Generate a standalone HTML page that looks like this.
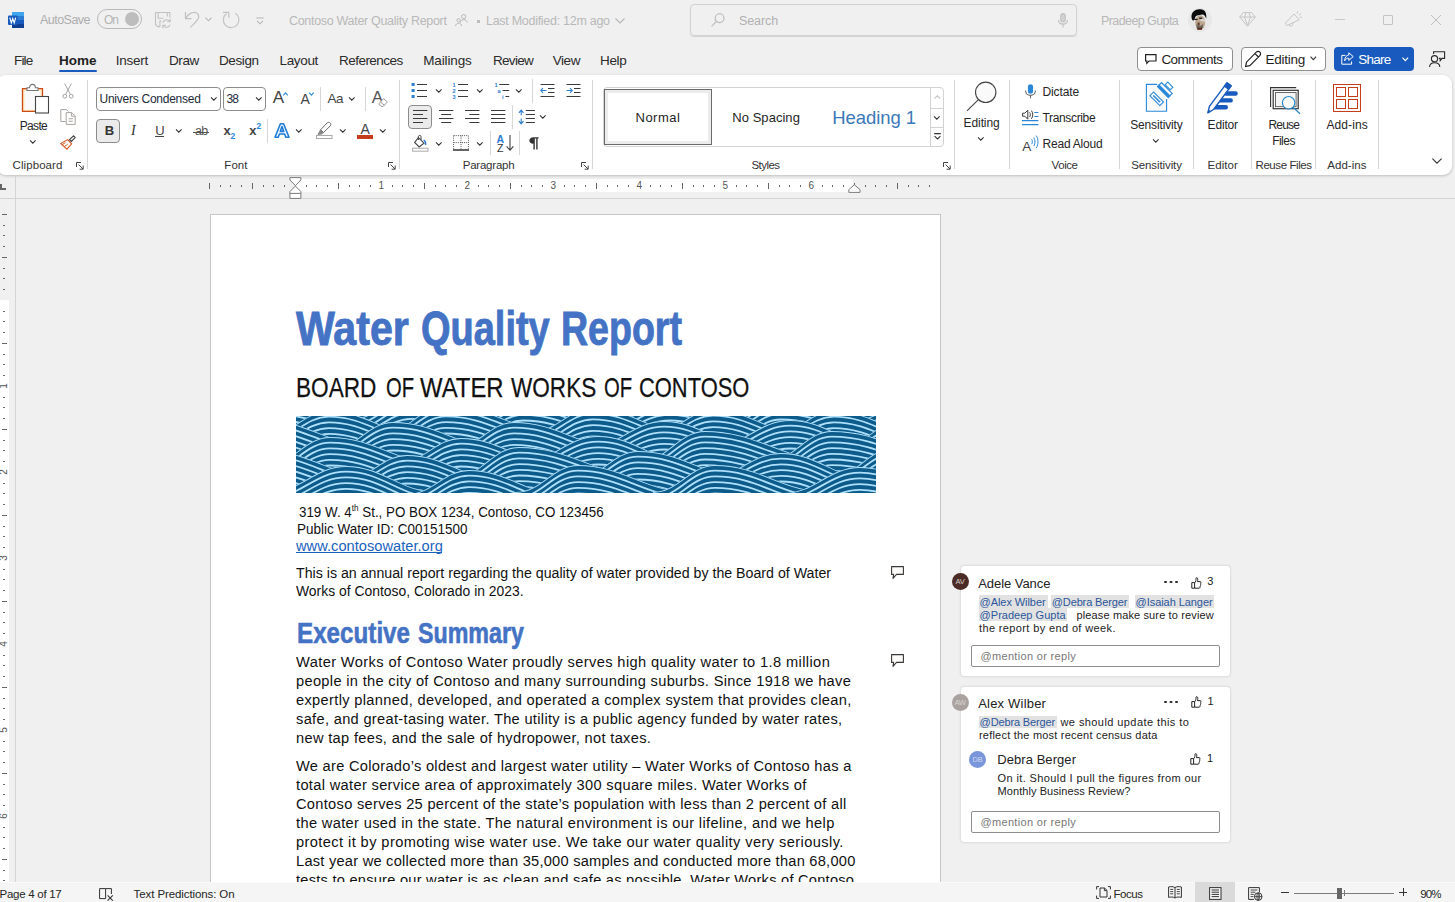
<!DOCTYPE html>
<html>
<head>
<meta charset="utf-8">
<title>Word</title>
<style>
*{box-sizing:border-box;margin:0;padding:0}
html,body{width:1455px;height:902px;overflow:hidden;background:#f0f0f0;font-family:"Liberation Sans",sans-serif;color:#222;}
body{position:relative;font-size:12px}
.abs{position:absolute}
.t{position:absolute;white-space:nowrap;line-height:1}
svg{position:absolute;overflow:visible}
/* ---------- title bar ---------- */
#titlebar{position:absolute;left:0;top:0;width:1455px;height:40px}
.gray{color:#9a9a9a}
/* ---------- tabs ---------- */
#tabs .t{font-size:13.5px;color:#2b2b2b;top:53.6px}
/* ---------- ribbon ---------- */
#ribbon{position:absolute;left:-3px;top:75px;width:1455px;height:100px;background:#fff;border-radius:9px;box-shadow:0 1px 3px rgba(0,0,0,.22)}
.sep{position:absolute;width:1px;background:#d6d6d6}
.glabel{position:absolute;white-space:nowrap;font-size:11.5px;color:#333;top:159.6px;line-height:1;letter-spacing:-0.1px}
.rt{position:absolute;white-space:nowrap;font-size:12px;color:#262626;line-height:1;letter-spacing:-0.2px}
/* ---------- ruler ---------- */
#ruler{position:absolute;left:0;top:176px;width:1455px;height:23px}
/* ---------- doc ---------- */
#page{position:absolute;left:210px;top:214px;width:731px;height:690px;background:#fff;border:1px solid #c6c6c6}
/* ---------- status ---------- */
#status{position:absolute;left:0;top:882px;width:1455px;height:20px;background:#f5f5f5}
#status .t{font-size:11.5px;color:#262626}
</style>
</head>
<body>

<!-- ================= TITLE BAR ================= -->
<div id="titlebar">
<!-- word icon -->
<svg style="left:8px;top:12px" width="16" height="16" viewBox="0 0 16 16">
  <rect x="4" y="0" width="12" height="4" fill="#41a5ee"/>
  <rect x="4" y="4" width="12" height="4" fill="#2b7cd3"/>
  <rect x="4" y="8" width="12" height="4" fill="#185abd"/>
  <rect x="4" y="12" width="12" height="4" fill="#103f91"/>
  <rect x="0" y="3.5" width="9.5" height="9.5" rx="1" fill="#185abd"/>
  <path d="M1.8 5.6 L3.3 10.9 L4.75 6.6 L6.2 10.9 L7.7 5.6" fill="none" stroke="#fff" stroke-width="1.15" stroke-linejoin="miter"/>
</svg>
<div class="t gray" style="left:40px;top:14px;font-size:12.5px;letter-spacing:-0.53px;color:#adadad">AutoSave</div>
<div class="abs" style="left:97px;top:9px;width:45px;height:20px;border:1px solid #b9b9b9;border-radius:10px"></div>
<div class="t" style="left:104px;top:14px;font-size:12px;color:#b4b4b4;letter-spacing:-1px">On</div>
<div class="abs" style="left:125px;top:12px;width:14px;height:14px;border-radius:7px;background:#bdbdbd"></div>
<!-- save -->
<svg style="left:155px;top:12px" width="17" height="17" viewBox="0 0 17 17" fill="none" stroke="#c2c2c2" stroke-width="1.1">
  <path d="M5.3 14.6 H2.7 L0.5 12.5 V0.5 H14.8 V5.4"/>
  <path d="M3.2 0.5 V6.2 H8.6 M12.3 0.5 V4.5"/>
  <path d="M4.9 14.6 V9.1 H6.5"/>
  <path d="M8 10.6 A3.7 3.7 0 0 1 14.6 9.4 M15.2 6.8 V9.8 H12.2"/>
  <path d="M15 12.6 A3.7 3.7 0 0 1 8.4 13.8 M7.8 16.4 V13.4 H10.8"/>
</svg>
<!-- undo -->
<svg style="left:184px;top:11px" width="17" height="18" viewBox="0 0 17 18" fill="none" stroke="#c0c0c0" stroke-width="1.2">
  <path d="M1.5 1 V7.6 H7.5"/>
  <path d="M1.8 7.3 C4 3.5 7 1.4 10.5 1.4 C13.5 1.4 15.2 4 14.6 6.6 C14 9 11 12 6.4 16.4"/>
</svg>
<svg style="left:205px;top:17px" width="7" height="5" viewBox="0 0 7 5" fill="none" stroke="#b5b5b5" stroke-width="1.1"><path d="M0.5 0.7 L3.5 3.8 L6.5 0.7"/></svg>
<!-- redo -->
<svg style="left:222px;top:11px" width="18" height="18" viewBox="0 0 18 18" fill="none" stroke="#c4c4c4" stroke-width="1.2">
  <path d="M1 1.4 H6.8 V6.8"/>
  <path d="M13.4 2.2 A7.8 7.8 0 1 1 4.6 2.4"/>
</svg>
<!-- customize qat -->
<svg style="left:256px;top:16.5px" width="8" height="8" viewBox="0 0 8 8" fill="none" stroke="#b5b5b5" stroke-width="1.1"><path d="M0.3 1 H7.7 M1 3.8 L4 6.8 L7 3.8"/></svg>

<div class="t" style="left:289px;top:15px;font-size:12.5px;color:#b8b8b8;letter-spacing:-0.31px">Contoso Water Quality Report</div>
<!-- people -->
<svg style="left:455px;top:14px" width="13" height="13" viewBox="0 0 13 13" fill="none" stroke="#b8b8b8" stroke-width="1">
  <circle cx="8.7" cy="2.6" r="2.1"/><path d="M5.5 8.5 C5.5 4.8 12 4.8 12.3 8.5"/>
  <circle cx="3.6" cy="6.3" r="1.7"/><path d="M0.6 12 C0.6 8.4 6.6 8.4 6.6 12"/>
</svg>
<div class="abs" style="left:477px;top:20px;width:3px;height:3px;background:#bdbdbd"></div>
<div class="t" style="left:486px;top:15px;font-size:12.5px;color:#b8b8b8;letter-spacing:-0.28px">Last Modified: 12m ago</div>
<svg style="left:615px;top:18px" width="10" height="6" viewBox="0 0 10 6" fill="none" stroke="#b5b5b5" stroke-width="1.1"><path d="M0.5 0.5 L5 5 L9.5 0.5"/></svg>

<!-- search -->
<div class="abs" style="left:690px;top:4px;width:387px;height:32px;border:1px solid #d2d2d2;border-radius:4px;box-shadow:0 1px 1px rgba(0,0,0,.12)"></div>
<svg style="left:711px;top:13px" width="14" height="14" viewBox="0 0 14 14" fill="none" stroke="#b8b8b8" stroke-width="1.1"><circle cx="8.6" cy="5.2" r="4.4"/><path d="M5.4 8.4 L0.6 13.4"/></svg>
<div class="t" style="left:739px;top:15px;font-size:12.5px;color:#b0b0b0;letter-spacing:-0.1px">Search</div>
<svg style="left:1058px;top:13px" width="10" height="15" viewBox="0 0 10 15" fill="none" stroke="#c0c0c0" stroke-width="1.1"><rect x="2.8" y="0.6" width="4.4" height="8.4" rx="2.2" fill="#d2d2d2"/><path d="M0.6 7 C0.6 12.5 9.4 12.5 9.4 7 M5 11.2 V14.5"/></svg>

<div class="t" style="left:1101px;top:15px;font-size:12.5px;color:#b8b8b8;letter-spacing:-0.58px">Pradeep Gupta</div>
<!-- avatar -->
<svg style="left:1188px;top:8.4px" width="24" height="24" viewBox="0 0 24 24">
  <defs><clipPath id="avc"><circle cx="12" cy="12" r="12"/></clipPath></defs>
  <g clip-path="url(#avc)">
    <rect width="24" height="24" fill="#e7e7e7"/>
    <ellipse cx="12.2" cy="14.6" rx="5" ry="7.4" fill="#bda68f"/>
    <path d="M13 10.5 C15.5 10.5 17.5 11.5 17.4 13.5 C16 14 13.5 13.4 12 12.6 Z" fill="#dad3d1"/>
    <path d="M3.6 10 C2.6 3.5 8 0.8 12 1.2 C16.5 0.8 19 4.5 18.2 10.8 C17.5 8.4 16.2 6.2 14 6.4 C11 7.6 8.5 6.8 7.6 8.4 C6.8 9.6 6.8 11.6 5.6 12.6 C4.4 12.6 3.8 11.4 3.6 10 Z" fill="#0b0b0b"/>
    <rect x="11.2" y="9.6" width="3" height="1.3" fill="#1c1c1c"/>
    <rect x="6.2" y="10.8" width="3.4" height="1.2" fill="#1c1c1c"/>
    <path d="M9.6 14.4 H11.6 V17.6 H9.6 Z" fill="#5b3528"/>
    <path d="M8.2 16.5 L12.4 18 L15 16 L15 20 L9 21.5 Z" fill="#6f6762"/>
    <rect x="9.4" y="19.6" width="4.6" height="2.2" fill="#5a2e20"/>
  </g>
</svg>
<!-- diamond -->
<svg style="left:1239px;top:12px" width="17" height="15" viewBox="0 0 17 15" fill="none" stroke="#c6c6c6" stroke-width="1"><path d="M4.2 0.6 H12.8 L16.3 5 L8.5 14.2 L0.7 5 Z M0.7 5 H16.3 M5.6 5 L8.5 14 L11.4 5 M5.6 5 L7 0.8 M11.4 5 L10 0.8"/></svg>
<!-- megaphone -->
<svg style="left:1285px;top:11px" width="17" height="17" viewBox="0 0 17 17" fill="none" stroke="#c6c6c6" stroke-width="1"><path d="M9 3 L14.2 8.8 L2 14.6 C0.6 13.6 0.4 12.4 1 11.4 Z M4.2 13.8 C4.6 16 7.6 16 7.8 12.2 M12 2.4 L12.8 0.4 M14 4.2 L16 2.4 M14.8 6.4 L16.8 6.2"/></svg>
<!-- window controls -->
<div class="abs" style="left:1335px;top:19px;width:10px;height:1px;background:#c8c8c8"></div>
<div class="abs" style="left:1383px;top:15px;width:10px;height:10px;border:1px solid #c4c4c4;border-radius:1px"></div>
<svg style="left:1431px;top:15px" width="10" height="10" viewBox="0 0 10 10" fill="none" stroke="#c0c0c0" stroke-width="1"><path d="M0 0 L10 10 M10 0 L0 10"/></svg>

</div>

<!-- ================= TABS ================= -->
<div id="tabs">
<div class="t" style="left:14px;letter-spacing:-0.82px">File</div>
<div class="t" style="left:59px;font-weight:700;letter-spacing:0;color:#1f1f1f">Home</div>
<div class="abs" style="left:59px;top:70px;width:38px;height:2px;background:#185abd;border-radius:1px"></div>
<div class="t" style="left:115.7px;letter-spacing:-0.24px">Insert</div>
<div class="t" style="left:169px;letter-spacing:-0.38px">Draw</div>
<div class="t" style="left:219px;letter-spacing:-0.39px">Design</div>
<div class="t" style="left:279.5px;letter-spacing:-0.34px">Layout</div>
<div class="t" style="left:339px;letter-spacing:-0.53px">References</div>
<div class="t" style="left:423.2px;letter-spacing:-0.13px">Mailings</div>
<div class="t" style="left:493px;letter-spacing:-0.71px">Review</div>
<div class="t" style="left:552.7px;letter-spacing:-0.43px">View</div>
<div class="t" style="left:600px;letter-spacing:-0.32px">Help</div>

<!-- Comments button -->
<div class="abs" style="left:1137px;top:47px;width:96px;height:24px;background:#fff;border:1px solid #8f8f8f;border-radius:4px"></div>
<svg style="left:1145px;top:54px" width="12" height="10" viewBox="0 0 12 10" fill="none" stroke="#222" stroke-width="1.2"><path d="M0.6 0.6 H11 V7 H4 L1.8 9.3 V7 H0.6 Z"/></svg>
<div class="t" style="left:1161.4px;top:52.7px;letter-spacing:-0.52px;color:#1f1f1f">Comments</div>
<!-- Editing button -->
<div class="abs" style="left:1241px;top:47px;width:85px;height:24px;background:#fff;border:1px solid #8f8f8f;border-radius:4px"></div>
<svg style="left:1245px;top:51px" width="16" height="16" viewBox="0 0 16 16" fill="none" stroke="#222" stroke-width="1.2"><path d="M11.3 1.2 C12.4 0.1 14 0.3 14.9 1.2 C15.8 2.1 15.8 3.6 14.8 4.6 L4.8 14.6 L0.6 15.5 L1.5 11.2 Z M10 2.6 L13.4 6"/></svg>
<div class="t" style="left:1265.5px;top:52.7px;letter-spacing:-0.25px;color:#1f1f1f">Editing</div>
<svg style="left:1310px;top:56px" width="7" height="5" viewBox="0 0 7 5" fill="none" stroke="#333" stroke-width="1.1"><path d="M0.5 0.7 L3.3 3.6 L6.1 0.7"/></svg>
<!-- Share button -->
<div class="abs" style="left:1334px;top:47px;width:80px;height:24px;background:#185abd;border-radius:4px"></div>
<svg style="left:1341px;top:52px" width="13" height="13" viewBox="0 0 13 13" fill="none" stroke="#fff" stroke-width="1"><path d="M4.4 3.4 H0.8 V12.2 H10.6 V9.4"/><path d="M7.8 0.8 L12.2 4.6 L7.8 8.4 V6.2 C5.8 6.2 4.6 7 3.6 8.8 C3.8 5.4 5.4 3.2 7.8 3 Z"/></svg>
<div class="t" style="left:1358.3px;top:52.7px;letter-spacing:-0.77px;color:#fff">Share</div>
<svg style="left:1402px;top:57px" width="7" height="5" viewBox="0 0 7 5" fill="none" stroke="#fff" stroke-width="1.2"><path d="M0.5 0.7 L3.3 3.6 L6.1 0.7"/></svg>
<!-- person/catch-up icon -->
<svg style="left:1428px;top:51px" width="18" height="17" viewBox="0 0 18 17" fill="none" stroke="#2a2a2a" stroke-width="1.1"><circle cx="6.5" cy="7.7" r="3.1"/><path d="M1.6 15.9 C1.6 10.4 11.6 10.4 11.8 15.9"/><path d="M5.6 3 V0.8 H16.6 V7.4 H14 L12.2 9.6 V7.4 H10.8"/></svg>

</div>

<!-- ================= RIBBON ================= -->
<div id="ribbon"></div>
<div id="ribboncontent">
<!-- ===== Clipboard ===== -->
<!-- paste icon -->
<svg style="left:21px;top:83px" width="29" height="31" viewBox="0 0 29 31">
  <path d="M1.5 5.6 H21.5 V28.6 H1.5 Z" fill="#fde9bd"/>
  <path d="M3.5 7.6 H19.5 V26.8 H3.5 Z" fill="#fafafa"/>
  <path d="M14 28.4 H1.5 V5.7 H21.5 V13" fill="none" stroke="#cc4a14" stroke-width="1.3"/>
  <path d="M6 7.5 V4.8 H8.6 C8.6 0.2 14.4 0.2 14.4 4.8 H17 V7.5 Z" fill="#fff" stroke="#777" stroke-width="1.1"/>
  <rect x="14.5" y="13.5" width="13" height="16.5" fill="#fff" stroke="#444" stroke-width="1.1"/>
</svg>
<div class="rt" style="left:19.7px;top:120.2px;letter-spacing:-0.66px">Paste</div>
<svg style="left:29.5px;top:140px" width="7" height="4" viewBox="0 0 7 4" fill="none" stroke="#333" stroke-width="1.1"><path d="M0 0.4 L2.8 3.2 L5.6 0.4"/></svg>
<!-- scissors -->
<svg style="left:62px;top:83px" width="12" height="16" viewBox="0 0 12 16" fill="none" stroke="#a2a2a2" stroke-width="1"><path d="M2.6 0.5 L8.4 11.5 M9.4 0.5 L3.6 11.5"/><circle cx="2.8" cy="13.2" r="1.9"/><circle cx="9.2" cy="13.2" r="1.9"/></svg>
<!-- copy -->
<svg style="left:60px;top:109px" width="16" height="16" viewBox="0 0 16 16" fill="none" stroke="#a9a39f" stroke-width="1"><path d="M5.5 12.5 H0.8 V0.6 H6.6 L8.4 2.6"/><path d="M6.2 3.6 H11.8 L15.2 7 V15.4 H6.2 Z" fill="#fff"/><path d="M11.6 3.8 V7.2 H15 M8.6 9.8 H12.8 M8.6 12.2 H12.8"/></svg>
<!-- format painter -->
<svg style="left:60px;top:135px" width="16" height="15" viewBox="0 0 16 15" fill="none"><path d="M8.2 5.2 L10.8 8.2 M13.6 0.8 L15.2 2.4 L11.4 6.4 L9.6 4.6 Z" stroke="#444" stroke-width="1.1"/><path d="M7.6 4.6 L11.6 8.8 L7 14.2 L0.8 8.6 Z" fill="#fff" stroke="#d35a23" stroke-width="1.1"/><path d="M2.2 9.8 L5.4 7.6 M4.2 11.6 L7.6 9.4" stroke="#d35a23" stroke-width="1"/></svg>
<div class="glabel" style="left:12.6px;letter-spacing:0.07px">Clipboard</div>
<svg class="dl" style="left:76px;top:161.5px" width="8" height="8" viewBox="0 0 8 8" fill="none" stroke="#444" stroke-width="1"><path d="M0.5 5 V0.5 H5 M2.6 2.6 L7 7 M7.2 3.6 V7.2 H3.6"/></svg>
<div class="sep" style="left:87px;top:80px;height:89px"></div>

<!-- ===== Font ===== -->
<div class="abs" style="left:96px;top:87px;width:125px;height:24px;border:1px solid #8c8c8c;border-radius:4px;background:#fff"></div>
<div class="rt" style="left:99.5px;top:92.9px;letter-spacing:-0.25px;color:#1d2b3a">Univers Condensed</div>
<svg style="left:211px;top:97px" width="7" height="4" viewBox="0 0 7 4" fill="none" stroke="#333" stroke-width="1.1"><path d="M0 0.4 L2.8 3.2 L5.6 0.4"/></svg>
<div class="abs" style="left:223px;top:87px;width:43px;height:24px;border:1px solid #8c8c8c;border-radius:4px;background:#fff"></div>
<div class="rt" style="left:226.6px;top:92.9px;letter-spacing:-1px;color:#1d2b3a">38</div>
<svg style="left:256px;top:97px" width="7" height="4" viewBox="0 0 7 4" fill="none" stroke="#333" stroke-width="1.1"><path d="M0 0.4 L2.8 3.2 L5.6 0.4"/></svg>
<!-- grow / shrink -->
<div class="rt" style="left:272.7px;top:89px;font-size:17px;color:#444">A</div>
<svg style="left:282.6px;top:91.5px" width="5" height="4" viewBox="0 0 5 4" fill="none" stroke="#2b88d8" stroke-width="1.1"><path d="M0.3 3.4 L2.5 0.8 L4.7 3.4"/></svg>
<div class="rt" style="left:300.5px;top:91.7px;font-size:14px;color:#444">A</div>
<svg style="left:309.3px;top:91.5px" width="5" height="4" viewBox="0 0 5 4" fill="none" stroke="#2b88d8" stroke-width="1.1"><path d="M0.3 0.6 L2.5 3.2 L4.7 0.6"/></svg>
<div class="sep" style="left:319.6px;top:87px;height:24px"></div>
<div class="rt" style="left:327.4px;top:92px;font-size:13.5px;letter-spacing:-0.31px;color:#444">Aa</div>
<svg style="left:348.6px;top:97px" width="7" height="4" viewBox="0 0 7 4" fill="none" stroke="#333" stroke-width="1.1"><path d="M0 0.4 L2.8 3.2 L5.6 0.4"/></svg>
<div class="sep" style="left:364.6px;top:87px;height:24px"></div>
<!-- clear formatting -->
<div class="rt" style="left:371.8px;top:89px;font-size:17px;color:#555">A</div>
<svg style="left:378px;top:98px" width="10" height="9" viewBox="0 0 10 9" fill="#fff" stroke="#9a9a9a" stroke-width="1"><path d="M5.6 0.6 L9.4 4 L5.2 8.4 H3 L0.8 6 Z M2.6 4 L6.4 7.4"/></svg>

<!-- row 2 -->
<div class="abs" style="left:96px;top:119px;width:24px;height:24px;border:1px solid #8c8c8c;border-radius:4px;background:#ebebeb"></div>
<div class="rt" style="left:104.8px;top:123.8px;font-size:13px;font-weight:700;color:#333">B</div>
<div class="rt" style="left:131px;top:123.8px;font-size:13px;font-style:italic;font-family:'Liberation Serif',serif;color:#333;font-size:14px;top:124px">I</div>
<div class="rt" style="left:155.2px;top:123.6px;font-size:13px;color:#444">U</div>
<div class="abs" style="left:155px;top:136px;width:9px;height:1px;background:#444"></div>
<svg style="left:175.5px;top:129px" width="7" height="4" viewBox="0 0 7 4" fill="none" stroke="#333" stroke-width="1.1"><path d="M0 0.4 L2.8 3.2 L5.6 0.4"/></svg>
<div class="rt" style="left:195px;top:125px;font-size:12.5px;color:#555;letter-spacing:-0.6px">ab</div>
<div class="abs" style="left:193px;top:132px;width:16px;height:1px;background:#555"></div>
<div class="rt" style="left:223.5px;top:123.6px;font-size:13px;font-weight:700;color:#444">x</div>
<div class="rt" style="left:230.6px;top:132.2px;font-size:8.5px;font-weight:700;color:#2b88d8">2</div>
<div class="rt" style="left:249.3px;top:123.6px;font-size:13px;font-weight:700;color:#444">x</div>
<div class="rt" style="left:256.4px;top:121.8px;font-size:8.5px;font-weight:700;color:#2b88d8">2</div>
<div class="sep" style="left:267px;top:119px;height:24px"></div>
<!-- text effects A -->
<svg style="left:274px;top:123px" width="16" height="15" viewBox="0 0 16 15"><path d="M1 14.2 L6.4 0.8 H9.6 L15 14.2 H11.8 L10.6 11 H5.4 L4.2 14.2 Z M6.3 8.4 H9.7 L8 3.6 Z" fill="#f4f9ff" stroke="#1e7bd6" stroke-width="1.6" stroke-linejoin="round"/></svg>
<svg style="left:295.7px;top:129px" width="7" height="4" viewBox="0 0 7 4" fill="none" stroke="#333" stroke-width="1.1"><path d="M0 0.4 L2.8 3.2 L5.6 0.4"/></svg>
<!-- highlighter -->
<svg style="left:316px;top:122px" width="17" height="17" viewBox="0 0 17 17" fill="none"><path d="M11 1 C12 0 13.4 0.2 14.2 1 C15 1.8 15.2 3 14.2 4 L7.4 10.6 L4.6 7.8 Z" stroke="#666" stroke-width="1"/><path d="M4.6 7.8 L7.4 10.6 L5.6 12 L2 12.4 Z" fill="#888" stroke="#777" stroke-width="0.8"/><rect x="0.5" y="13.5" width="15.5" height="3" fill="#fff" stroke="#aaa" stroke-width="1"/></svg>
<svg style="left:339.5px;top:129px" width="7" height="4" viewBox="0 0 7 4" fill="none" stroke="#333" stroke-width="1.1"><path d="M0 0.4 L2.8 3.2 L5.6 0.4"/></svg>
<!-- font color -->
<div class="rt" style="left:360.6px;top:122px;font-size:14px;color:#444">A</div>
<div class="abs" style="left:357px;top:135px;width:16px;height:3.6px;background:#c43e1c"></div>
<svg style="left:380.3px;top:129px" width="7" height="4" viewBox="0 0 7 4" fill="none" stroke="#333" stroke-width="1.1"><path d="M0 0.4 L2.8 3.2 L5.6 0.4"/></svg>
<div class="glabel" style="left:224.3px;letter-spacing:0.07px">Font</div>
<svg style="left:388px;top:161.5px" width="8" height="8" viewBox="0 0 8 8" fill="none" stroke="#444" stroke-width="1"><path d="M0.5 5 V0.5 H5 M2.6 2.6 L7 7 M7.2 3.6 V7.2 H3.6"/></svg>
<div class="sep" style="left:399px;top:80px;height:89px"></div>
<!-- ===== Paragraph ===== -->
<!-- bullets -->
<svg style="left:411px;top:83px" width="17" height="16" viewBox="0 0 17 16"><g fill="#2b7cd3"><rect x="0.6" y="0" width="3" height="3"/><rect x="0.6" y="6" width="3" height="3"/><rect x="0.6" y="12" width="3" height="3"/></g><path d="M6 1.5 H16 M6 7.5 H16 M6 13.5 H16" stroke="#3a3a3a" stroke-width="1"/></svg>
<svg style="left:435.5px;top:89px" width="7" height="4" viewBox="0 0 7 4" fill="none" stroke="#333" stroke-width="1.1"><path d="M0 0.4 L2.8 3.2 L5.6 0.4"/></svg>
<!-- numbering -->
<svg style="left:452px;top:83px" width="17" height="16" viewBox="0 0 17 16"><g fill="#2b7cd3" font-family="Liberation Sans" font-size="5.6" font-weight="700"><text x="0.6" y="3.8">1</text><text x="0.6" y="9.8">2</text><text x="0.6" y="15.8">3</text></g><path d="M6 1.5 H16 M6 7.5 H16 M6 13.5 H16" stroke="#3a3a3a" stroke-width="1"/></svg>
<svg style="left:476.6px;top:89px" width="7" height="4" viewBox="0 0 7 4" fill="none" stroke="#333" stroke-width="1.1"><path d="M0 0.4 L2.8 3.2 L5.6 0.4"/></svg>
<!-- multilevel -->
<svg style="left:493.5px;top:83px" width="16" height="17" viewBox="0 0 16 17"><g fill="#2b7cd3" font-family="Liberation Sans" font-size="5.6" font-weight="700"><text x="0.4" y="4">1</text><text x="3.6" y="9.8">a</text><text x="8" y="15.8">i</text></g><path d="M5.2 1.5 H15.2 M8.6 7.5 H15.2 M11.4 13.5 H15.2" stroke="#3a3a3a" stroke-width="1"/></svg>
<svg style="left:515.7px;top:89px" width="7" height="4" viewBox="0 0 7 4" fill="none" stroke="#333" stroke-width="1.1"><path d="M0 0.4 L2.8 3.2 L5.6 0.4"/></svg>
<div class="sep" style="left:532px;top:79px;height:24px"></div>
<!-- decrease indent -->
<svg style="left:539.5px;top:83px" width="15" height="15" viewBox="0 0 15 15" fill="none"><path d="M0.5 1.5 H14.5 M8 5.5 H14.5 M8 9.5 H14.5 M0.5 13.5 H14.5" stroke="#3a3a3a" stroke-width="1"/><path d="M6.4 7.5 H0.8 M3 5.1 L0.8 7.5 L3 9.9" stroke="#2b7cd3" stroke-width="1.1"/></svg>
<!-- increase indent -->
<svg style="left:565.5px;top:83px" width="15" height="15" viewBox="0 0 15 15" fill="none"><path d="M0.5 1.5 H14.5 M8 5.5 H14.5 M8 9.5 H14.5 M0.5 13.5 H14.5" stroke="#3a3a3a" stroke-width="1"/><path d="M0.6 7.5 H6.2 M4 5.1 L6.2 7.5 L4 9.9" stroke="#2b7cd3" stroke-width="1.1"/></svg>

<!-- row 2: alignment -->
<div class="abs" style="left:408px;top:105px;width:24px;height:24px;border:1px solid #8c8c8c;border-radius:4px;background:#ebebeb"></div>
<svg style="left:412.5px;top:110px" width="15" height="13" viewBox="0 0 15 13" fill="none" stroke="#3a3a3a" stroke-width="1"><path d="M0 0.5 H14.4 M0 4.5 H10 M0 8.5 H14.4 M0 12.5 H10"/></svg>
<svg style="left:438.6px;top:110px" width="15" height="13" viewBox="0 0 15 13" fill="none" stroke="#3a3a3a" stroke-width="1"><path d="M0 0.5 H14.4 M2.2 4.5 H12.2 M0 8.5 H14.4 M2.2 12.5 H12.2"/></svg>
<svg style="left:464.7px;top:110px" width="15" height="13" viewBox="0 0 15 13" fill="none" stroke="#3a3a3a" stroke-width="1"><path d="M0 0.5 H14.4 M4.4 4.5 H14.4 M0 8.5 H14.4 M4.4 12.5 H14.4"/></svg>
<svg style="left:490.8px;top:110px" width="15" height="13" viewBox="0 0 15 13" fill="none" stroke="#3a3a3a" stroke-width="1"><path d="M0 0.5 H14.4 M0 4.5 H14.4 M0 8.5 H14.4 M0 12.5 H14.4"/></svg>
<div class="sep" style="left:512px;top:105px;height:24px"></div>
<!-- line spacing -->
<svg style="left:518px;top:109px" width="18" height="16" viewBox="0 0 18 16" fill="none"><path d="M3.2 1.4 V6.2 M0.9 3.8 L3.2 1.2 L5.5 3.8 M3.2 9.4 V14.6 M0.9 12.2 L3.2 14.8 L5.5 12.2" stroke="#2b7cd3" stroke-width="1.1"/><path d="M7.8 1.5 H16.9 M7.8 5.5 H16.9 M7.8 9.5 H16.9 M7.8 13.5 H16.9" stroke="#3a3a3a" stroke-width="1"/></svg>
<svg style="left:540.4px;top:115px" width="7" height="4" viewBox="0 0 7 4" fill="none" stroke="#333" stroke-width="1.1"><path d="M0 0.4 L2.8 3.2 L5.6 0.4"/></svg>

<!-- row 3 -->
<!-- shading -->
<svg style="left:411.5px;top:134.5px" width="17" height="17" viewBox="0 0 17 17" fill="none"><path d="M6.4 2.6 L12 8.2 L7.2 12 L2.6 7.4 Z" fill="#fff" stroke="#444" stroke-width="1.1"/><path d="M6.4 5 V1.6 C6.4 0 9 0 9 1.6 V5" stroke="#444" stroke-width="1"/><path d="M11.6 5.2 C13.6 6 13.8 8 13.6 10" stroke="#2b7cd3" stroke-width="1.4"/><rect x="0.6" y="13.2" width="15.4" height="3" fill="#fff" stroke="#aaa" stroke-width="1"/></svg>
<svg style="left:435.5px;top:141.5px" width="7" height="4" viewBox="0 0 7 4" fill="none" stroke="#333" stroke-width="1.1"><path d="M0 0.4 L2.8 3.2 L5.6 0.4"/></svg>
<!-- borders -->
<svg style="left:452.5px;top:134.5px" width="16" height="16" viewBox="0 0 16 16" fill="none"><path d="M0.6 0.6 H15.4 M0.6 7.6 H15.4 M0.6 0.6 V14 M15.4 0.6 V14 M8 0.6 V14" stroke="#555" stroke-width="1" stroke-dasharray="1 1.1"/><path d="M0 15 H16" stroke="#222" stroke-width="1.4"/></svg>
<svg style="left:476.6px;top:141.5px" width="7" height="4" viewBox="0 0 7 4" fill="none" stroke="#333" stroke-width="1.1"><path d="M0 0.4 L2.8 3.2 L5.6 0.4"/></svg>
<div class="sep" style="left:489.6px;top:131px;height:24px"></div>
<!-- sort -->
<div class="rt" style="left:496.6px;top:133.6px;font-size:10.5px;font-weight:700;color:#2b7cd3">A</div>
<div class="rt" style="left:497px;top:142.6px;font-size:10.5px;color:#333">Z</div>
<svg style="left:505.5px;top:135px" width="8" height="16" viewBox="0 0 8 16" fill="none" stroke="#444" stroke-width="1.1"><path d="M4 0 V15 M0.6 11.4 L4 15.2 L7.4 11.4"/></svg>
<div class="sep" style="left:519.3px;top:131px;height:24px"></div>
<!-- pilcrow -->
<svg style="left:529px;top:136.5px" width="10" height="13" viewBox="0 0 10 13"><path d="M4.6 0.2 H9.6 V1.6 H8.6 V12.6 H7.2 V1.6 H5.8 V12.6 H4.4 V6.8 C-1 6.8 -1 0.2 4.6 0.2 Z" fill="#333"/></svg>
<div class="glabel" style="left:462.7px;letter-spacing:-0.22px">Paragraph</div>
<svg style="left:581.3px;top:161.5px" width="8" height="8" viewBox="0 0 8 8" fill="none" stroke="#444" stroke-width="1"><path d="M0.5 5 V0.5 H5 M2.6 2.6 L7 7 M7.2 3.6 V7.2 H3.6"/></svg>
<div class="sep" style="left:592px;top:80px;height:89px"></div>

<!-- ===== Styles ===== -->
<div class="abs" style="left:602.5px;top:87px;width:341px;height:59.5px;border:1px solid #d2d2d2;border-radius:4px;background:#fff"></div>
<div class="abs" style="left:604px;top:89px;width:108px;height:56px;border:1px solid #6a6a6a;background:#fff;box-shadow:inset 0 0 0 3px #ececec"></div>
<div class="rt" style="left:635.5px;top:110.8px;font-size:13px;letter-spacing:0.5px;color:#1f1f1f">Normal</div>
<div class="rt" style="left:732.3px;top:110.8px;font-size:13px;letter-spacing:0.04px;color:#1f1f1f">No Spacing</div>
<div class="rt" style="left:832.2px;top:109.2px;font-size:18.5px;letter-spacing:-0.05px;color:#3b78b8">Heading 1</div>
<div class="abs" style="left:929.5px;top:87px;width:1px;height:59px;background:#d2d2d2"></div>
<div class="abs" style="left:929.5px;top:107.5px;width:14px;height:1px;background:#d2d2d2"></div>
<div class="abs" style="left:929.5px;top:126.5px;width:14px;height:1px;background:#d2d2d2"></div>
<svg style="left:933.8px;top:94.5px" width="7" height="4" viewBox="0 0 7 4" fill="none" stroke="#c4c4c4" stroke-width="1.1"><path d="M0.5 3.6 L3.3 0.8 L6.1 3.6"/></svg>
<svg style="left:933.8px;top:115.5px" width="7" height="4" viewBox="0 0 7 4" fill="none" stroke="#333" stroke-width="1.1"><path d="M0 0.4 L2.8 3.2 L5.6 0.4"/></svg>
<svg style="left:933.5px;top:132.5px" width="7" height="7" viewBox="0 0 7 7" fill="none" stroke="#333" stroke-width="1.1"><path d="M0.2 0.6 H6.8 M0.6 3.2 L3.5 6 L6.4 3.2"/></svg>
<div class="glabel" style="left:751.5px;letter-spacing:-0.55px">Styles</div>
<svg style="left:943px;top:161.5px" width="8" height="8" viewBox="0 0 8 8" fill="none" stroke="#444" stroke-width="1"><path d="M0.5 5 V0.5 H5 M2.6 2.6 L7 7 M7.2 3.6 V7.2 H3.6"/></svg>
<div class="sep" style="left:954.3px;top:80px;height:89px"></div>
<!-- ===== Editing (find) ===== -->
<svg style="left:966px;top:81px" width="32" height="31" viewBox="0 0 32 31" fill="none" stroke="#444" stroke-width="1.1"><circle cx="19.7" cy="11.3" r="10.2" fill="#fafafa"/><path d="M12.4 18.6 L1 29.8"/></svg>
<div class="rt" style="left:963.6px;top:117.4px;letter-spacing:-0.1px">Editing</div>
<svg style="left:978.4px;top:136.5px" width="7" height="4" viewBox="0 0 7 4" fill="none" stroke="#333" stroke-width="1.1"><path d="M0 0.4 L2.8 3.2 L5.6 0.4"/></svg>
<div class="sep" style="left:1009.3px;top:80px;height:89px"></div>

<!-- ===== Voice ===== -->
<!-- dictate mic -->
<svg style="left:1024.5px;top:84px" width="11" height="15" viewBox="0 0 11 15" fill="none"><rect x="2.9" y="0.3" width="5.2" height="9.4" rx="2.6" fill="#2b88d8"/><path d="M0.6 6.6 C0.6 13 10.4 13 10.4 6.6 M5.5 11.4 V14.2" stroke="#666" stroke-width="1.1"/></svg>
<div class="rt" style="left:1042.5px;top:85.6px;letter-spacing:-0.12px">Dictate</div>
<!-- transcribe -->
<svg style="left:1022px;top:109px" width="17" height="17" viewBox="0 0 17 17" fill="none"><path d="M0.6 4.2 H2.8 L5.8 1.2 V10.2 L2.8 7.2 H0.6 Z" stroke="#3a3a3a" stroke-width="1"/><path d="M7.6 3.4 C8.6 4.6 8.6 6.8 7.6 8 M9.4 1.6 C11.2 3.8 11.2 7.6 9.4 9.8" stroke="#3a3a3a" stroke-width="1"/><path d="M12.4 3.5 H16.4 M12.4 7.5 H16.4" stroke="#2b88d8" stroke-width="1"/><path d="M0 11.6 H16.4 M0 15.6 H16.4" stroke="#2b88d8" stroke-width="1.1"/></svg>
<div class="rt" style="left:1042.5px;top:111.6px;letter-spacing:-0.35px">Transcribe</div>
<!-- read aloud -->
<div class="rt" style="left:1022.2px;top:139.6px;font-size:13.5px;color:#444">A</div>
<svg style="left:1030.5px;top:135px" width="8" height="14" viewBox="0 0 8 14" fill="none" stroke="#2b88d8" stroke-width="1"><path d="M0.6 4.4 C1.6 5.6 1.6 8 0.6 9.2 M2.8 2.6 C4.4 4.8 4.4 8.8 2.8 11 M5.2 0.6 C7.6 4 7.6 9.6 5.2 13"/></svg>
<div class="rt" style="left:1042.5px;top:138.2px;letter-spacing:-0.21px">Read Aloud</div>
<div class="glabel" style="left:1051.6px;letter-spacing:-0.43px">Voice</div>
<div class="sep" style="left:1119.3px;top:80px;height:89px"></div>

<!-- ===== Sensitivity ===== -->
<svg style="left:1145px;top:81px" width="30" height="32" viewBox="0 0 30 32" fill="none" stroke="#2b88d8" stroke-width="1.1"><path d="M12.2 3.4 H1.4 V30.2 H21.6 V18" fill="#fafafa"/><g transform="translate(11.7 17.8) rotate(45)"><rect x="-7" y="-2.6" width="14" height="5.2" fill="#fff"/><rect x="-4.6" y="-0.5" width="9.2" height="1" fill="#2b88d8" stroke-width="0.6"/></g><g transform="translate(19.9 9) rotate(45)"><rect x="-7.6" y="-2.8" width="15.2" height="5.6" fill="#fff"/><rect x="-7.6" y="0.6" width="15.2" height="2.2" fill="#2b88d8"/></g><g transform="translate(24 4.9) rotate(45)"><rect x="-3.6" y="-1.8" width="7.2" height="3.6" fill="#fff"/></g></svg>
<div class="rt" style="left:1130.2px;top:118.8px;letter-spacing:-0.15px">Sensitivity</div>
<svg style="left:1153.2px;top:138.7px" width="7" height="4" viewBox="0 0 7 4" fill="none" stroke="#333" stroke-width="1.1"><path d="M0 0.4 L2.8 3.2 L5.6 0.4"/></svg>
<div class="glabel" style="left:1131.2px;letter-spacing:-0.1px">Sensitivity</div>
<div class="sep" style="left:1193.2px;top:80px;height:89px"></div>

<!-- ===== Editor ===== -->
<svg style="left:1207px;top:82px" width="32" height="32" viewBox="0 0 32 32" fill="none"><path d="M19 11.5 H28.6 M13 18.4 H23.7 M7.5 25.3 H18.8" stroke="#185abd" stroke-width="4.4" stroke-linecap="round"/><path d="M0.9 30.8 L6.6 27.5 L24.1 3.9 L19.9 0.9 L2.4 24.4 Z" fill="#fafafa" stroke="#185abd" stroke-width="1.4" stroke-linejoin="round"/><path d="M21.7 7.2 L24.1 3.9 L19.9 0.9 L17.5 4.1 Z" fill="#185abd" stroke="#185abd" stroke-width="1.4" stroke-linejoin="round"/><path d="M0.9 30.8 L3.4 29.4 L1.6 28 Z" fill="#185abd" stroke="#185abd" stroke-width="0.8"/></svg>
<div class="rt" style="left:1207.6px;top:118.8px;letter-spacing:-0.18px">Editor</div>
<div class="glabel" style="left:1207.6px;letter-spacing:0.04px">Editor</div>
<div class="sep" style="left:1251.3px;top:80px;height:89px"></div>

<!-- ===== Reuse Files ===== -->
<svg style="left:1269.8px;top:86.9px" width="32" height="29" viewBox="0 0 32 29" fill="none"><path d="M0.6 20 V0.6 H26.2" stroke="#333" stroke-width="1.1"/><rect x="3.2" y="3.3" width="25" height="18.4" stroke="#333" stroke-width="1.2"/><rect x="5.5" y="5.6" width="20.6" height="14.1" fill="#f5f5f5" stroke="#444" stroke-width="0.8"/><circle cx="18.6" cy="15.7" r="6.2" fill="#fbfbfb" stroke="#2b88c8" stroke-width="1.2"/><path d="M23 20.2 L30 26.8" stroke="#2b88c8" stroke-width="1.2"/></svg>
<div class="rt" style="left:1268.5px;top:118.8px;letter-spacing:-0.82px">Reuse</div>
<div class="rt" style="left:1272.2px;top:134.6px;letter-spacing:-0.53px">Files</div>
<div class="glabel" style="left:1255.5px;letter-spacing:-0.42px">Reuse Files</div>
<div class="sep" style="left:1315.4px;top:80px;height:89px"></div>

<!-- ===== Add-ins ===== -->
<svg style="left:1333px;top:84px" width="28" height="28" viewBox="0 0 28 28" fill="none" stroke="#c43e1c" stroke-width="1"><rect x="0.5" y="0.5" width="27" height="27"/><rect x="3.5" y="3.5" width="9" height="9"/><rect x="15.5" y="3.5" width="9" height="9"/><rect x="3.5" y="15.5" width="9" height="9"/><rect x="15.5" y="15.5" width="9" height="9"/></svg>
<div class="rt" style="left:1326.4px;top:118.8px;letter-spacing:0.1px">Add-ins</div>
<div class="glabel" style="left:1327.3px;letter-spacing:0.03px">Add-ins</div>
<div class="sep" style="left:1378.4px;top:80px;height:89px"></div>
<!-- collapse -->
<svg style="left:1432.2px;top:158.4px" width="10" height="6" viewBox="0 0 10 6" fill="none" stroke="#333" stroke-width="1.1"><path d="M0.4 0.6 L5 5.2 L9.6 0.6"/></svg>



</div>

<!-- ================= RULER ================= -->
<div id="ruler">
<div class="abs" style="left:0;top:22px;width:1455px;height:1px;background:#d4d4d4"></div>
<div class="abs" style="left:295px;top:3px;width:558px;height:12.5px;background:#fff"></div>
<div class="abs" style="left:208.9px;top:7px;width:1px;height:6px;background:#666"></div>
<div class="abs" style="left:219.6px;top:9px;width:1px;height:2px;background:#666"></div>
<div class="abs" style="left:230.4px;top:9px;width:1px;height:2px;background:#666"></div>
<div class="abs" style="left:241.1px;top:9px;width:1px;height:2px;background:#666"></div>
<div class="abs" style="left:251.9px;top:7px;width:1px;height:6px;background:#666"></div>
<div class="abs" style="left:262.6px;top:9px;width:1px;height:2px;background:#666"></div>
<div class="abs" style="left:273.4px;top:9px;width:1px;height:2px;background:#666"></div>
<div class="abs" style="left:284.1px;top:9px;width:1px;height:2px;background:#666"></div>
<div class="abs" style="left:305.6px;top:9px;width:1px;height:2px;background:#666"></div>
<div class="abs" style="left:316.4px;top:9px;width:1px;height:2px;background:#666"></div>
<div class="abs" style="left:327.1px;top:9px;width:1px;height:2px;background:#666"></div>
<div class="abs" style="left:337.9px;top:7px;width:1px;height:6px;background:#666"></div>
<div class="abs" style="left:348.6px;top:9px;width:1px;height:2px;background:#666"></div>
<div class="abs" style="left:359.4px;top:9px;width:1px;height:2px;background:#666"></div>
<div class="abs" style="left:370.1px;top:9px;width:1px;height:2px;background:#666"></div>
<div class="t" style="left:378.4px;top:4.6px;font-size:10px;color:#555;width:6px;text-align:center">1</div>
<div class="abs" style="left:391.6px;top:9px;width:1px;height:2px;background:#666"></div>
<div class="abs" style="left:402.4px;top:9px;width:1px;height:2px;background:#666"></div>
<div class="abs" style="left:413.1px;top:9px;width:1px;height:2px;background:#666"></div>
<div class="abs" style="left:423.9px;top:7px;width:1px;height:6px;background:#666"></div>
<div class="abs" style="left:434.6px;top:9px;width:1px;height:2px;background:#666"></div>
<div class="abs" style="left:445.4px;top:9px;width:1px;height:2px;background:#666"></div>
<div class="abs" style="left:456.1px;top:9px;width:1px;height:2px;background:#666"></div>
<div class="t" style="left:464.4px;top:4.6px;font-size:10px;color:#555;width:6px;text-align:center">2</div>
<div class="abs" style="left:477.6px;top:9px;width:1px;height:2px;background:#666"></div>
<div class="abs" style="left:488.4px;top:9px;width:1px;height:2px;background:#666"></div>
<div class="abs" style="left:499.1px;top:9px;width:1px;height:2px;background:#666"></div>
<div class="abs" style="left:509.9px;top:7px;width:1px;height:6px;background:#666"></div>
<div class="abs" style="left:520.6px;top:9px;width:1px;height:2px;background:#666"></div>
<div class="abs" style="left:531.4px;top:9px;width:1px;height:2px;background:#666"></div>
<div class="abs" style="left:542.1px;top:9px;width:1px;height:2px;background:#666"></div>
<div class="t" style="left:550.4px;top:4.6px;font-size:10px;color:#555;width:6px;text-align:center">3</div>
<div class="abs" style="left:563.6px;top:9px;width:1px;height:2px;background:#666"></div>
<div class="abs" style="left:574.4px;top:9px;width:1px;height:2px;background:#666"></div>
<div class="abs" style="left:585.1px;top:9px;width:1px;height:2px;background:#666"></div>
<div class="abs" style="left:595.9px;top:7px;width:1px;height:6px;background:#666"></div>
<div class="abs" style="left:606.6px;top:9px;width:1px;height:2px;background:#666"></div>
<div class="abs" style="left:617.4px;top:9px;width:1px;height:2px;background:#666"></div>
<div class="abs" style="left:628.1px;top:9px;width:1px;height:2px;background:#666"></div>
<div class="t" style="left:636.4px;top:4.6px;font-size:10px;color:#555;width:6px;text-align:center">4</div>
<div class="abs" style="left:649.6px;top:9px;width:1px;height:2px;background:#666"></div>
<div class="abs" style="left:660.4px;top:9px;width:1px;height:2px;background:#666"></div>
<div class="abs" style="left:671.1px;top:9px;width:1px;height:2px;background:#666"></div>
<div class="abs" style="left:681.9px;top:7px;width:1px;height:6px;background:#666"></div>
<div class="abs" style="left:692.6px;top:9px;width:1px;height:2px;background:#666"></div>
<div class="abs" style="left:703.4px;top:9px;width:1px;height:2px;background:#666"></div>
<div class="abs" style="left:714.1px;top:9px;width:1px;height:2px;background:#666"></div>
<div class="t" style="left:722.4px;top:4.6px;font-size:10px;color:#555;width:6px;text-align:center">5</div>
<div class="abs" style="left:735.6px;top:9px;width:1px;height:2px;background:#666"></div>
<div class="abs" style="left:746.4px;top:9px;width:1px;height:2px;background:#666"></div>
<div class="abs" style="left:757.1px;top:9px;width:1px;height:2px;background:#666"></div>
<div class="abs" style="left:767.9px;top:7px;width:1px;height:6px;background:#666"></div>
<div class="abs" style="left:778.6px;top:9px;width:1px;height:2px;background:#666"></div>
<div class="abs" style="left:789.4px;top:9px;width:1px;height:2px;background:#666"></div>
<div class="abs" style="left:800.1px;top:9px;width:1px;height:2px;background:#666"></div>
<div class="t" style="left:808.4px;top:4.6px;font-size:10px;color:#555;width:6px;text-align:center">6</div>
<div class="abs" style="left:821.6px;top:9px;width:1px;height:2px;background:#666"></div>
<div class="abs" style="left:832.4px;top:9px;width:1px;height:2px;background:#666"></div>
<div class="abs" style="left:843.1px;top:9px;width:1px;height:2px;background:#666"></div>
<div class="abs" style="left:853.9px;top:7px;width:1px;height:6px;background:#666"></div>
<div class="abs" style="left:864.6px;top:9px;width:1px;height:2px;background:#666"></div>
<div class="abs" style="left:875.4px;top:9px;width:1px;height:2px;background:#666"></div>
<div class="abs" style="left:886.1px;top:9px;width:1px;height:2px;background:#666"></div>
<div class="abs" style="left:896.9px;top:7px;width:1px;height:6px;background:#666"></div>
<div class="abs" style="left:907.6px;top:9px;width:1px;height:2px;background:#666"></div>
<div class="abs" style="left:918.4px;top:9px;width:1px;height:2px;background:#666"></div>
<div class="abs" style="left:929.1px;top:9px;width:1px;height:2px;background:#666"></div>
<svg style="left:289px;top:1px" width="13" height="22" viewBox="0 0 13 22" fill="#fff" stroke="#7a7a7a" stroke-width="1"><path d="M0.9 0.6 H11.9 V3 L6.4 8.6 L0.9 3 Z"/><path d="M0.9 21.4 V14.6 L6.4 9 L11.9 14.6 V21.4 Z M0.9 16.4 H11.9"/></svg>
<svg style="left:847.5px;top:8px" width="13" height="9" viewBox="0 0 13 9" fill="#fff" stroke="#7a7a7a" stroke-width="1"><path d="M0.8 8.4 V5.6 L6.4 0.8 L12 5.6 V8.4 Z"/></svg>
<div class="abs" style="left:0;top:8px;width:2px;height:6px;background:#666"></div><div class="abs" style="left:0;top:12px;width:6px;height:2px;background:#666"></div>

</div>

<!-- ================= DOCUMENT ================= -->
<div id="vruler">
<div class="abs" style="left:15px;top:176px;width:1px;height:708px;background:#d4d4d4"></div>
<div class="abs" style="left:0;top:300px;width:8.5px;height:584px;background:#fff"></div>
<div class="abs" style="left:2px;top:213.8px;width:5px;height:1px;background:#666"></div>
<div class="abs" style="left:3px;top:224.6px;width:2px;height:1px;background:#666"></div>
<div class="abs" style="left:3px;top:235.3px;width:2px;height:1px;background:#666"></div>
<div class="abs" style="left:3px;top:246.1px;width:2px;height:1px;background:#666"></div>
<div class="abs" style="left:2px;top:256.8px;width:5px;height:1px;background:#666"></div>
<div class="abs" style="left:3px;top:267.6px;width:2px;height:1px;background:#666"></div>
<div class="abs" style="left:3px;top:278.3px;width:2px;height:1px;background:#666"></div>
<div class="abs" style="left:3px;top:289.1px;width:2px;height:1px;background:#666"></div>
<div class="abs" style="left:3px;top:310.6px;width:2px;height:1px;background:#666"></div>
<div class="abs" style="left:3px;top:321.3px;width:2px;height:1px;background:#666"></div>
<div class="abs" style="left:3px;top:332.1px;width:2px;height:1px;background:#666"></div>
<div class="abs" style="left:2px;top:342.8px;width:5px;height:1px;background:#666"></div>
<div class="abs" style="left:3px;top:353.6px;width:2px;height:1px;background:#666"></div>
<div class="abs" style="left:3px;top:364.3px;width:2px;height:1px;background:#666"></div>
<div class="abs" style="left:3px;top:375.1px;width:2px;height:1px;background:#666"></div>
<div class="t" style="left:-1px;top:381.3px;font-size:10px;color:#555;width:10px;height:10px;text-align:center;transform:rotate(-90deg)">1</div>
<div class="abs" style="left:3px;top:396.6px;width:2px;height:1px;background:#666"></div>
<div class="abs" style="left:3px;top:407.3px;width:2px;height:1px;background:#666"></div>
<div class="abs" style="left:3px;top:418.1px;width:2px;height:1px;background:#666"></div>
<div class="abs" style="left:2px;top:428.8px;width:5px;height:1px;background:#666"></div>
<div class="abs" style="left:3px;top:439.6px;width:2px;height:1px;background:#666"></div>
<div class="abs" style="left:3px;top:450.3px;width:2px;height:1px;background:#666"></div>
<div class="abs" style="left:3px;top:461.1px;width:2px;height:1px;background:#666"></div>
<div class="t" style="left:-1px;top:467.3px;font-size:10px;color:#555;width:10px;height:10px;text-align:center;transform:rotate(-90deg)">2</div>
<div class="abs" style="left:3px;top:482.6px;width:2px;height:1px;background:#666"></div>
<div class="abs" style="left:3px;top:493.3px;width:2px;height:1px;background:#666"></div>
<div class="abs" style="left:3px;top:504.1px;width:2px;height:1px;background:#666"></div>
<div class="abs" style="left:2px;top:514.8px;width:5px;height:1px;background:#666"></div>
<div class="abs" style="left:3px;top:525.5px;width:2px;height:1px;background:#666"></div>
<div class="abs" style="left:3px;top:536.3px;width:2px;height:1px;background:#666"></div>
<div class="abs" style="left:3px;top:547.0px;width:2px;height:1px;background:#666"></div>
<div class="t" style="left:-1px;top:553.3px;font-size:10px;color:#555;width:10px;height:10px;text-align:center;transform:rotate(-90deg)">3</div>
<div class="abs" style="left:3px;top:568.5px;width:2px;height:1px;background:#666"></div>
<div class="abs" style="left:3px;top:579.3px;width:2px;height:1px;background:#666"></div>
<div class="abs" style="left:3px;top:590.0px;width:2px;height:1px;background:#666"></div>
<div class="abs" style="left:2px;top:600.8px;width:5px;height:1px;background:#666"></div>
<div class="abs" style="left:3px;top:611.5px;width:2px;height:1px;background:#666"></div>
<div class="abs" style="left:3px;top:622.3px;width:2px;height:1px;background:#666"></div>
<div class="abs" style="left:3px;top:633.0px;width:2px;height:1px;background:#666"></div>
<div class="t" style="left:-1px;top:639.3px;font-size:10px;color:#555;width:10px;height:10px;text-align:center;transform:rotate(-90deg)">4</div>
<div class="abs" style="left:3px;top:654.5px;width:2px;height:1px;background:#666"></div>
<div class="abs" style="left:3px;top:665.3px;width:2px;height:1px;background:#666"></div>
<div class="abs" style="left:3px;top:676.0px;width:2px;height:1px;background:#666"></div>
<div class="abs" style="left:2px;top:686.8px;width:5px;height:1px;background:#666"></div>
<div class="abs" style="left:3px;top:697.5px;width:2px;height:1px;background:#666"></div>
<div class="abs" style="left:3px;top:708.3px;width:2px;height:1px;background:#666"></div>
<div class="abs" style="left:3px;top:719.0px;width:2px;height:1px;background:#666"></div>
<div class="t" style="left:-1px;top:725.3px;font-size:10px;color:#555;width:10px;height:10px;text-align:center;transform:rotate(-90deg)">5</div>
<div class="abs" style="left:3px;top:740.5px;width:2px;height:1px;background:#666"></div>
<div class="abs" style="left:3px;top:751.3px;width:2px;height:1px;background:#666"></div>
<div class="abs" style="left:3px;top:762.0px;width:2px;height:1px;background:#666"></div>
<div class="abs" style="left:2px;top:772.8px;width:5px;height:1px;background:#666"></div>
<div class="abs" style="left:3px;top:783.5px;width:2px;height:1px;background:#666"></div>
<div class="abs" style="left:3px;top:794.3px;width:2px;height:1px;background:#666"></div>
<div class="abs" style="left:3px;top:805.0px;width:2px;height:1px;background:#666"></div>
<div class="t" style="left:-1px;top:811.3px;font-size:10px;color:#555;width:10px;height:10px;text-align:center;transform:rotate(-90deg)">6</div>
<div class="abs" style="left:3px;top:826.5px;width:2px;height:1px;background:#666"></div>
<div class="abs" style="left:3px;top:837.3px;width:2px;height:1px;background:#666"></div>
<div class="abs" style="left:3px;top:848.0px;width:2px;height:1px;background:#666"></div>
<div class="abs" style="left:2px;top:858.8px;width:5px;height:1px;background:#666"></div>
<div class="abs" style="left:3px;top:869.5px;width:2px;height:1px;background:#666"></div>
<div class="abs" style="left:3px;top:880.3px;width:2px;height:1px;background:#666"></div>

</div>
<div id="page"></div>
<div id="doc">
<div class="t" style="left:296.10px;top:305px;font-size:47.2px;font-weight:700;color:#4472c4;transform:scaleX(0.8722);transform-origin:0 0;-webkit-text-stroke:0.9px #4472c4;">Water</div>
<div class="t" style="left:421.30px;top:305px;font-size:47.2px;font-weight:700;color:#4472c4;transform:scaleX(0.8046);transform-origin:0 0;-webkit-text-stroke:0.9px #4472c4;">Quality</div>
<div class="t" style="left:561.01px;top:305px;font-size:47.2px;font-weight:700;color:#4472c4;transform:scaleX(0.7955);transform-origin:0 0;-webkit-text-stroke:0.9px #4472c4;">Report</div>
<div class="t" style="left:296.49px;top:374px;font-size:28px;font-weight:400;color:#111;transform:scaleX(0.8075);transform-origin:0 0;-webkit-text-stroke:0.25px #111;">BOARD</div>
<div class="t" style="left:385.58px;top:374px;font-size:28px;font-weight:400;color:#111;transform:scaleX(0.7205);transform-origin:0 0;-webkit-text-stroke:0.25px #111;">OF</div>
<div class="t" style="left:419.90px;top:374px;font-size:28px;font-weight:400;color:#111;transform:scaleX(0.8526);transform-origin:0 0;-webkit-text-stroke:0.25px #111;">WATER</div>
<div class="t" style="left:510.50px;top:374px;font-size:28px;font-weight:400;color:#111;transform:scaleX(0.8059);transform-origin:0 0;-webkit-text-stroke:0.25px #111;">WORKS</div>
<div class="t" style="left:603.68px;top:374px;font-size:28px;font-weight:400;color:#111;transform:scaleX(0.7232);transform-origin:0 0;-webkit-text-stroke:0.25px #111;">OF</div>
<div class="t" style="left:638.82px;top:374px;font-size:28px;font-weight:400;color:#111;transform:scaleX(0.7826);transform-origin:0 0;-webkit-text-stroke:0.25px #111;">CONTOSO</div>
<div class="t" style="left:299.3px;top:505px;font-size:14px;color:#111;transform:scaleX(0.9547);transform-origin:0 0">319 W. 4<span style="font-size:8.5px;position:relative;top:-5.8px">th</span> St., PO BOX 1234, Contoso, CO 123456</div>
<div class="t" style="left:296.8px;top:522px;font-size:14px;color:#111;transform:scaleX(0.9631);transform-origin:0 0;">Public Water ID: C00151500</div>
<div class="t" style="left:296.3px;top:539px;font-size:14px;color:#1a62bd;transform:scaleX(1.0450);transform-origin:0 0;letter-spacing:0.021px;">www.contosowater.org</div>
<div class="abs" style="left:296.3px;top:552px;width:145.4px;height:1px;background:#1a62bd"></div>
<div class="t" style="left:296.3px;top:566px;font-size:14px;color:#111;transform:scaleX(1.0135);transform-origin:0 0;">This is an annual report regarding the quality of water provided by the Board of Water</div>
<div class="t" style="left:296.3px;top:584px;font-size:14px;color:#111;transform:scaleX(0.9925);transform-origin:0 0;">Works of Contoso, Colorado in 2023.</div>
<div class="t" style="left:296.88px;top:618px;font-size:29.5px;font-weight:700;color:#4472c4;transform:scaleX(0.8207);transform-origin:0 0;-webkit-text-stroke:0.6px #4472c4;">Executive</div>
<div class="t" style="left:418.10px;top:618px;font-size:29.5px;font-weight:700;color:#4472c4;transform:scaleX(0.7879);transform-origin:0 0;-webkit-text-stroke:0.6px #4472c4;">Summary</div>
<div class="t" style="left:296.3px;top:655px;font-size:14px;color:#111;transform:scaleX(1.0450);transform-origin:0 0;letter-spacing:0.370px;">Water Works of Contoso Water proudly serves high quality water to 1.8 million</div>
<div class="t" style="left:296.3px;top:674px;font-size:14px;color:#111;transform:scaleX(1.0450);transform-origin:0 0;letter-spacing:0.305px;">people in the city of Contoso and many surrounding suburbs. Since 1918 we have</div>
<div class="t" style="left:296.3px;top:693px;font-size:14px;color:#111;transform:scaleX(1.0450);transform-origin:0 0;letter-spacing:0.317px;">expertly planned, developed, and operated a complex system that provides clean,</div>
<div class="t" style="left:296.3px;top:712px;font-size:14px;color:#111;transform:scaleX(1.0450);transform-origin:0 0;letter-spacing:0.302px;">safe, and great-tasing water. The utility is a public agency funded by water rates,</div>
<div class="t" style="left:296.3px;top:731px;font-size:14px;color:#111;transform:scaleX(1.0450);transform-origin:0 0;letter-spacing:0.311px;">new tap fees, and the sale of hydropower, not taxes.</div>
<div class="t" style="left:296.3px;top:759px;font-size:14px;color:#111;transform:scaleX(1.0450);transform-origin:0 0;letter-spacing:0.278px;">We are Colorado’s oldest and largest water utility – Water Works of Contoso has a</div>
<div class="t" style="left:296.3px;top:778px;font-size:14px;color:#111;transform:scaleX(1.0450);transform-origin:0 0;letter-spacing:0.315px;">total water service area of approximately 300 square miles. Water Works of</div>
<div class="t" style="left:296.3px;top:797px;font-size:14px;color:#111;transform:scaleX(1.0450);transform-origin:0 0;letter-spacing:0.284px;">Contoso serves 25 percent of the state’s population with less than 2 percent of all</div>
<div class="t" style="left:296.3px;top:816px;font-size:14px;color:#111;transform:scaleX(1.0450);transform-origin:0 0;letter-spacing:0.333px;">the water used in the state. The natural environment is our lifeline, and we help</div>
<div class="t" style="left:296.3px;top:835px;font-size:14px;color:#111;transform:scaleX(1.0450);transform-origin:0 0;letter-spacing:0.387px;">protect it by promoting wise water use. We take our water quality very seriously.</div>
<div class="t" style="left:296.3px;top:854px;font-size:14px;color:#111;transform:scaleX(1.0450);transform-origin:0 0;letter-spacing:0.229px;">Last year we collected more than 35,000 samples and conducted more than 68,000</div>
<div class="t" style="left:296.3px;top:873px;font-size:14px;color:#111;transform:scaleX(1.0450);transform-origin:0 0;letter-spacing:0.232px;">tests to ensure our water is as clean and safe as possible. Water Works of Contoso</div>
<svg style="left:296px;top:416px" width="580" height="77" viewBox="0 0 580 77"><defs><clipPath id="wv"><rect width="580" height="77"/></clipPath>
<path id="l0" d="M-88 0 C-63 0 -51 -27 -26 -27 C19 -27 42 0 88 0"/>
<clipPath id="c0"><path d="M-88 0 C-63 0 -51 -27 -26 -27 C19 -27 42 0 88 0 V60 H-88 Z"/></clipPath>
<g id="m0"><path d="M-88 0 C-63 0 -51 -27 -26 -27 C19 -27 42 0 88 0 V60 H-88 Z" fill="#0c5b8b"/><g clip-path="url(#c0)" fill="none" stroke="#aee0fb" stroke-width="1.8"><use href="#l0" y="0.0"/><use href="#l0" y="5.7"/><use href="#l0" y="11.4"/><use href="#l0" y="17.1"/><use href="#l0" y="22.8"/><use href="#l0" y="28.5"/><use href="#l0" y="34.2"/><use href="#l0" y="39.9"/><use href="#l0" y="45.6"/><use href="#l0" y="51.3"/></g></g>
<path id="l1" d="M-78 0 C-53 0 -41 -24 -16 -24 C22 -24 41 0 78 0"/>
<clipPath id="c1"><path d="M-78 0 C-53 0 -41 -24 -16 -24 C22 -24 41 0 78 0 V60 H-78 Z"/></clipPath>
<g id="m1"><path d="M-78 0 C-53 0 -41 -24 -16 -24 C22 -24 41 0 78 0 V60 H-78 Z" fill="#0c5b8b"/><g clip-path="url(#c1)" fill="none" stroke="#aee0fb" stroke-width="1.8"><use href="#l1" y="0.0"/><use href="#l1" y="5.7"/><use href="#l1" y="11.4"/><use href="#l1" y="17.1"/><use href="#l1" y="22.8"/><use href="#l1" y="28.5"/><use href="#l1" y="34.2"/><use href="#l1" y="39.9"/><use href="#l1" y="45.6"/><use href="#l1" y="51.3"/></g></g>
<path id="l2" d="M-98 0 C-73 0 -60 -30 -34 -30 C19 -30 45 0 98 0"/>
<clipPath id="c2"><path d="M-98 0 C-73 0 -60 -30 -34 -30 C19 -30 45 0 98 0 V60 H-98 Z"/></clipPath>
<g id="m2"><path d="M-98 0 C-73 0 -60 -30 -34 -30 C19 -30 45 0 98 0 V60 H-98 Z" fill="#0c5b8b"/><g clip-path="url(#c2)" fill="none" stroke="#aee0fb" stroke-width="1.8"><use href="#l2" y="0.0"/><use href="#l2" y="5.7"/><use href="#l2" y="11.4"/><use href="#l2" y="17.1"/><use href="#l2" y="22.8"/><use href="#l2" y="28.5"/><use href="#l2" y="34.2"/><use href="#l2" y="39.9"/><use href="#l2" y="45.6"/><use href="#l2" y="51.3"/></g></g>
<path id="l3" d="M-84 0 C-54 0 -39 -26 -8 -26 C29 -26 47 0 84 0"/>
<clipPath id="c3"><path d="M-84 0 C-54 0 -39 -26 -8 -26 C29 -26 47 0 84 0 V60 H-84 Z"/></clipPath>
<g id="m3"><path d="M-84 0 C-54 0 -39 -26 -8 -26 C29 -26 47 0 84 0 V60 H-84 Z" fill="#0c5b8b"/><g clip-path="url(#c3)" fill="none" stroke="#aee0fb" stroke-width="1.8"><use href="#l3" y="0.0"/><use href="#l3" y="5.7"/><use href="#l3" y="11.4"/><use href="#l3" y="17.1"/><use href="#l3" y="22.8"/><use href="#l3" y="28.5"/><use href="#l3" y="34.2"/><use href="#l3" y="39.9"/><use href="#l3" y="45.6"/><use href="#l3" y="51.3"/></g></g>
</defs><g clip-path="url(#wv)"><rect width="580" height="77" fill="#0c5b8b"/>
<use href="#m2" x="-118" y="4"/>
<use href="#m0" x="8" y="3"/>
<use href="#m1" x="131" y="4"/>
<use href="#m0" x="253" y="3"/>
<use href="#m3" x="382" y="2"/>
<use href="#m0" x="511" y="2"/>
<use href="#m1" x="640" y="3"/>
<use href="#m0" x="-77" y="17"/>
<use href="#m1" x="49" y="19"/>
<use href="#m0" x="176" y="16"/>
<use href="#m1" x="313" y="16"/>
<use href="#m1" x="433" y="18"/>
<use href="#m1" x="554" y="19"/>
<use href="#m1" x="692" y="19"/>
<use href="#m2" x="-132" y="34"/>
<use href="#m2" x="-12" y="31"/>
<use href="#m0" x="123" y="33"/>
<use href="#m0" x="244" y="33"/>
<use href="#m3" x="376" y="31"/>
<use href="#m3" x="502" y="30"/>
<use href="#m0" x="632" y="31"/>
<use href="#m3" x="-67" y="47"/>
<use href="#m0" x="60" y="48"/>
<use href="#m1" x="181" y="46"/>
<use href="#m3" x="310" y="46"/>
<use href="#m2" x="443" y="45"/>
<use href="#m2" x="570" y="45"/>
<use href="#m0" x="686" y="47"/>
<use href="#m1" x="-132" y="64"/>
<use href="#m0" x="-6" y="61"/>
<use href="#m1" x="127" y="63"/>
<use href="#m2" x="257" y="61"/>
<use href="#m0" x="368" y="62"/>
<use href="#m3" x="493" y="63"/>
<use href="#m2" x="632" y="62"/>
<use href="#m0" x="-57" y="78"/>
<use href="#m3" x="58" y="76"/>
<use href="#m1" x="189" y="78"/>
<use href="#m0" x="308" y="76"/>
<use href="#m0" x="445" y="76"/>
<use href="#m3" x="572" y="77"/>
<use href="#m1" x="699" y="77"/>
</g></svg>

<svg style="left:891px;top:565.8px" width="14" height="14" viewBox="0 0 14 14" fill="#fcfcfc" stroke="#3b3735" stroke-width="1.1" stroke-linejoin="round"><path d="M0.6 0.6 H12.4 V8.4 H5.5 L2 12.4 L2.6 8.4 H0.6 Z"/></svg>
<svg style="left:891px;top:654.1px" width="14" height="14" viewBox="0 0 14 14" fill="#fcfcfc" stroke="#3b3735" stroke-width="1.1" stroke-linejoin="round"><path d="M0.6 0.6 H12.4 V8.4 H5.5 L2 12.4 L2.6 8.4 H0.6 Z"/></svg>

</div>

<!-- ================= COMMENTS ================= -->
<div id="comments">
<style>
.card{position:absolute;left:960px;width:271px;background:#fff;border:1px solid #e1e1e1;border-radius:4px;box-shadow:0 0 2px rgba(0,0,0,.08)}
.cn{position:absolute;white-space:nowrap;line-height:1;font-size:13px;color:#222}
.cb{position:absolute;white-space:nowrap;line-height:1;font-size:11px;color:#222}
.men{color:#2b579a}
.mbg{position:absolute;background:#e2e2e2;height:12.4px}
.av{position:absolute;width:17px;height:17px;border-radius:50%;font-size:7.5px;line-height:17px;text-align:center;letter-spacing:-0.3px}
.rbox{position:absolute;left:971px;width:249px;height:22px;background:#fff;border:1px solid #8e8e8e;border-radius:2px}
</style>
<!-- card 1 -->
<div class="card" style="top:565px;height:112px"></div>
<div class="av" style="left:951.5px;top:573.3px;background:#4b2b25;color:#d9cfcc">AV</div>
<div class="cn" style="left:978.2px;top:577px;letter-spacing:-0.05px">Adele Vance</div>
<div class="abs" style="left:1164px;top:580.5px;width:2.6px;height:2.6px;border-radius:50%;background:#2a2a2a;box-shadow:5.5px 0 0 #2a2a2a,11px 0 0 #2a2a2a"></div>
<svg style="left:1190.5px;top:576.5px" width="11" height="12" viewBox="0 0 11 12" fill="none" stroke="#222" stroke-width="1" fill="#fff"><path d="M3.6 11.2 H0.8 V5.6 H3.6 Z M3.6 5.8 C5 4.6 5 3 5 1.2 C5 0.4 6.8 0.4 6.8 2.2 C6.8 3.2 6.6 3.8 6.4 4.6 H9.2 C10.2 4.6 10.2 6 9.4 6.2 C10.2 6.6 10 7.8 9.2 8 C9.8 8.6 9.4 9.6 8.8 9.8 C9.2 10.4 8.8 11.2 8 11.2 H3.6"/></svg>
<div class="cb" style="left:1207.3px;top:575.5px">3</div>
<div class="mbg" style="left:979px;top:595.2px;width:68.7px"></div>
<div class="mbg" style="left:1051.2px;top:595.2px;width:77.7px"></div>
<div class="mbg" style="left:1135px;top:595.2px;width:79px"></div>
<div class="mbg" style="left:979px;top:608.2px;width:88px"></div>
<div class="cb men" style="left:979.6px;top:597px;letter-spacing:-0.07px">@Alex Wilber</div>
<div class="cb men" style="left:1051.8px;top:597px;letter-spacing:-0.13px">@Debra Berger</div>
<div class="cb men" style="left:1135.6px;top:597px;letter-spacing:-0.06px">@Isaiah Langer</div>
<div class="cb men" style="left:979.6px;top:610px;letter-spacing:0.02px">@Pradeep Gupta</div>
<div class="cb" style="left:1076.5px;top:610px;letter-spacing:0.13px">please make sure to review</div>
<div class="cb" style="left:979px;top:622.5px;letter-spacing:0.37px">the report by end of week.</div>
<div class="rbox" style="top:645px"></div>
<div class="cb" style="left:980.5px;top:651px;letter-spacing:0.32px;color:#777">@mention or reply</div>

<!-- card 2 -->
<div class="card" style="top:685.5px;height:157px"></div>
<div class="av" style="left:951.5px;top:693.8px;background:#a9a29e;color:#d8d4d2">AW</div>
<div class="cn" style="left:978.2px;top:696.5px;letter-spacing:0.2px">Alex Wilber</div>
<div class="abs" style="left:1164px;top:700.7px;width:2.6px;height:2.6px;border-radius:50%;background:#2a2a2a;box-shadow:5.5px 0 0 #2a2a2a,11px 0 0 #2a2a2a"></div>
<svg style="left:1190.5px;top:696.4px" width="11" height="12" viewBox="0 0 11 12" fill="none" stroke="#222" stroke-width="1" fill="#fff"><path d="M3.6 11.2 H0.8 V5.6 H3.6 Z M3.6 5.8 C5 4.6 5 3 5 1.2 C5 0.4 6.8 0.4 6.8 2.2 C6.8 3.2 6.6 3.8 6.4 4.6 H9.2 C10.2 4.6 10.2 6 9.4 6.2 C10.2 6.6 10 7.8 9.2 8 C9.8 8.6 9.4 9.6 8.8 9.8 C9.2 10.4 8.8 11.2 8 11.2 H3.6"/></svg>
<div class="cb" style="left:1207.5px;top:695.5px">1</div>
<div class="mbg" style="left:979px;top:715.5px;width:78px"></div>
<div class="cb men" style="left:979.6px;top:717px;letter-spacing:-0.13px">@Debra Berger</div>
<div class="cb" style="left:1060.5px;top:717px;letter-spacing:0.42px">we should update this to</div>
<div class="cb" style="left:979px;top:730px;letter-spacing:0.21px">reflect the most recent census data</div>
<div class="av" style="left:969px;top:750.5px;background:#7a96da;color:#cfd9f2">DB</div>
<div class="cn" style="left:997.2px;top:753px;letter-spacing:0.07px">Debra Berger</div>
<svg style="left:1189.7px;top:753px" width="11" height="12" viewBox="0 0 11 12" fill="none" stroke="#222" stroke-width="1" fill="#fff"><path d="M3.6 11.2 H0.8 V5.6 H3.6 Z M3.6 5.8 C5 4.6 5 3 5 1.2 C5 0.4 6.8 0.4 6.8 2.2 C6.8 3.2 6.6 3.8 6.4 4.6 H9.2 C10.2 4.6 10.2 6 9.4 6.2 C10.2 6.6 10 7.8 9.2 8 C9.8 8.6 9.4 9.6 8.8 9.8 C9.2 10.4 8.8 11.2 8 11.2 H3.6"/></svg>
<div class="cb" style="left:1207px;top:752.5px">1</div>
<div class="cb" style="left:997.6px;top:773px;letter-spacing:0.38px">On it. Should I pull the figures from our</div>
<div class="cb" style="left:997.6px;top:786px;letter-spacing:0.06px">Monthly Business Review?</div>
<div class="rbox" style="top:811px"></div>
<div class="cb" style="left:980.5px;top:817px;letter-spacing:0.32px;color:#777">@mention or reply</div>

</div>

<!-- ================= STATUS ================= -->
<div id="status">
<div class="abs" id="statustopline" style="left:0;top:0;width:1455px;height:1px;background:#fafafa"></div>
<div class="t" style="left:-0.5px;top:7px;letter-spacing:-0.27px">Page 4 of 17</div>
<svg style="left:98.5px;top:5.5px" width="15" height="13" viewBox="0 0 15 13" fill="none" stroke="#333" stroke-width="1"><path d="M6.6 10.6 H0.6 V0.6 H6.6 M6.6 0.6 H12.4 V6 M6.6 0.6 V10.6"/><path d="M8.6 7.4 L13.8 12.6 M13.8 7.4 L8.6 12.6" stroke-width="1.1"/></svg>
<div class="t" style="left:133.6px;top:7px;letter-spacing:-0.1px">Text Predictions: On</div>
<!-- focus -->
<svg style="left:1095.5px;top:4px" width="15" height="13" viewBox="0 0 15 13" fill="none" stroke="#333" stroke-width="1"><path d="M0.6 3.4 V0.6 H3 M12 0.6 H14.4 V3.4 M14.4 9.6 V12.4 H12 M3 12.4 H0.6 V9.6"/><path d="M4 2 H8.6 L11 4.4 V11 H4 Z M8.4 2.2 V4.6 H10.8"/></svg>
<div class="t" style="left:1113.5px;top:7px;letter-spacing:-0.45px">Focus</div>
<!-- read mode -->
<svg style="left:1167.5px;top:4px" width="14" height="13" viewBox="0 0 14 13" fill="none" stroke="#333" stroke-width="1"><path d="M7 1.6 C5.4 0.4 2.6 0.4 0.6 1 V11.4 C2.6 10.8 5.4 10.8 7 12 C8.6 10.8 11.4 10.8 13.4 11.4 V1 C11.4 0.4 8.6 0.4 7 1.6 Z M7 1.6 V12"/><path d="M2.2 3.4 H5.2 M2.2 5.6 H5.2 M2.2 7.8 H5.2 M8.8 3.4 H11.8 M8.8 5.6 H11.8 M8.8 7.8 H11.8" stroke-width="0.9"/></svg>
<!-- print layout selected -->
<div class="abs" style="left:1195px;top:0;width:40px;height:20px;background:#dadada"></div>
<svg style="left:1208.5px;top:4.5px" width="13" height="13" viewBox="0 0 13 13" fill="none" stroke="#333" stroke-width="1"><rect x="0.6" y="0.6" width="11.4" height="11.8" fill="#f6f6f6"/><path d="M2.6 3 H10 M2.6 5.2 H10 M2.6 7.4 H10 M2.6 9.6 H10" stroke-width="1"/></svg>
<!-- web layout -->
<svg style="left:1248px;top:4.5px" width="15" height="14" viewBox="0 0 15 14" fill="none" stroke="#333" stroke-width="1"><path d="M6 12.4 H0.6 V0.6 H11.4 V5.4"/><path d="M2.6 3 H9.4 M2.6 5.2 H7.4 M2.6 7.4 H5.8 M2.6 9.6 H5.4" stroke-width="0.9"/><circle cx="10.2" cy="9.6" r="3.8" fill="#f3f3f3"/><path d="M6.4 9.6 H14 M10.2 5.8 V13.4 M10.2 5.8 C8.2 8 8.2 11.2 10.2 13.4 C12.2 11.2 12.2 8 10.2 5.8" stroke-width="0.8"/></svg>
<!-- zoom slider -->
<div class="abs" style="left:1281px;top:9.6px;width:7.5px;height:1px;background:#333"></div>
<div class="abs" style="left:1294px;top:10.6px;width:100px;height:1px;background:#7a7a7a"></div>
<div class="abs" style="left:1337.2px;top:5.5px;width:4.8px;height:11px;background:#666"></div>
<div class="abs" style="left:1344px;top:8.4px;width:1px;height:6px;background:#7a7a7a"></div>
<div class="abs" style="left:1399px;top:9.9px;width:8px;height:1px;background:#333"></div>
<div class="abs" style="left:1402.5px;top:6.4px;width:1px;height:8px;background:#333"></div>
<div class="t" style="left:1420.2px;top:7px;letter-spacing:-0.81px">90%</div>

</div>

</body>
</html>
